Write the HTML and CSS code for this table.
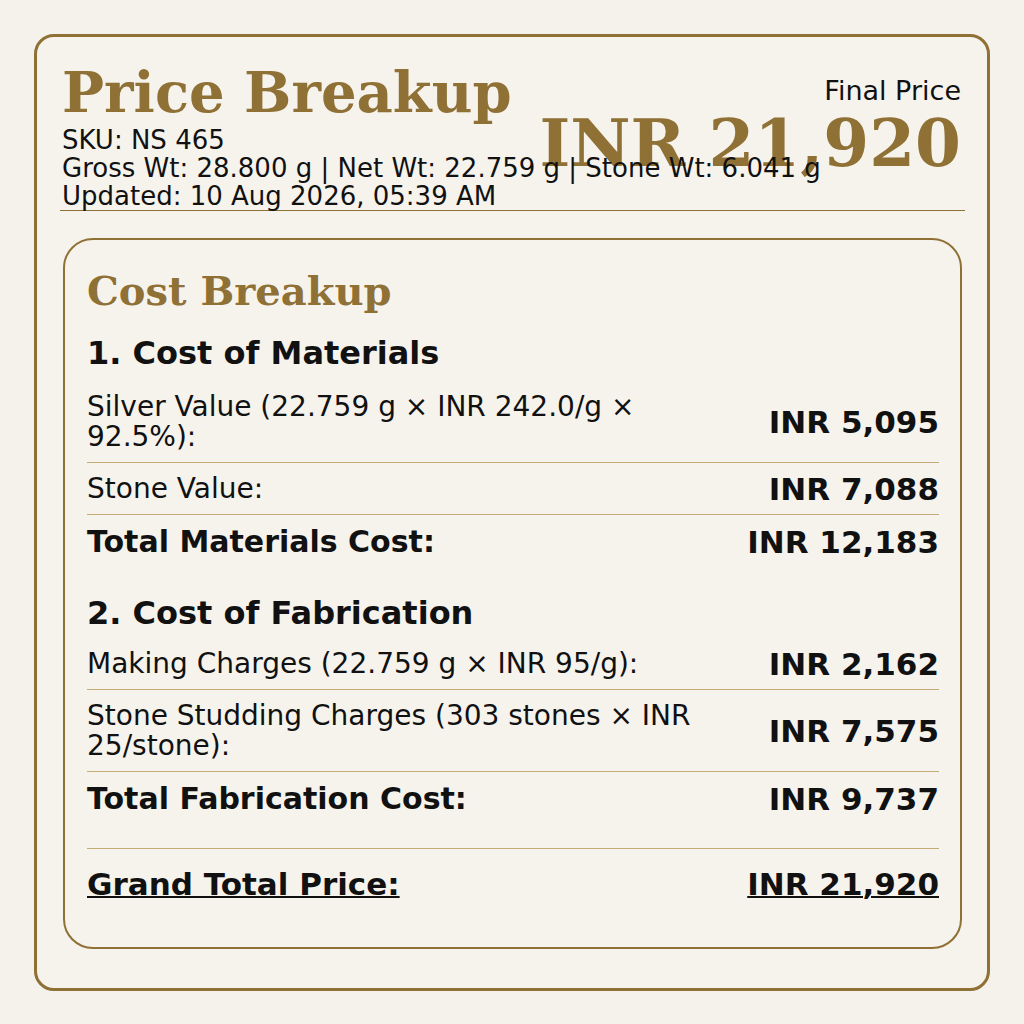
FILE: index.html
```html
<!DOCTYPE html>
<html lang="en">
<head>
<meta charset="utf-8">
<title>Price Breakup</title>
<link rel="stylesheet" href="styles.css">
</head>
<body>
<div class="card">
  <header class="header">
    <div class="header-left">
      <h1 class="title">Price Breakup</h1>
      <div class="meta">SKU: NS 465</div>
      <div class="meta">Gross Wt: 28.800 g | Net Wt: 22.759 g | Stone Wt: 6.041 g</div>
      <div class="meta">Updated: 10 Aug 2026, 05:39 AM</div>
    </div>
    <div class="header-right">
      <div class="final-label">Final Price</div>
      <div class="final-value">INR 21,920</div>
    </div>
  </header>

  <section class="cost">
    <h2 class="cost-title">Cost Breakup</h2>

    <h3 class="section-title">1. Cost of Materials</h3>
    <div class="row">
      <div class="label">Silver Value (22.759 g × INR 242.0/g × 92.5%):</div>
      <div class="value">INR 5,095</div>
    </div>
    <div class="row">
      <div class="label">Stone Value:</div>
      <div class="value">INR 7,088</div>
    </div>
    <div class="row total">
      <div class="label">Total Materials Cost:</div>
      <div class="value">INR 12,183</div>
    </div>

    <h3 class="section-title second">2. Cost of Fabrication</h3>
    <div class="row">
      <div class="label">Making Charges (22.759 g × INR 95/g):</div>
      <div class="value">INR 2,162</div>
    </div>
    <div class="row">
      <div class="label">Stone Studding Charges (303 stones × INR 25/stone):</div>
      <div class="value">INR 7,575</div>
    </div>
    <div class="row total">
      <div class="label">Total Fabrication Cost:</div>
      <div class="value">INR 9,737</div>
    </div>

    <div class="grand">
      <div class="grand-label">Grand Total Price:</div>
      <div class="grand-value">INR 21,920</div>
    </div>
  </section>
</div>
</body>
</html>
```

FILE: styles.css
```css
* { box-sizing: border-box; }

html, body {
  margin: 0;
  padding: 0;
  background: #f5f2ec;
}

body {
  padding: 34px;
  font-family: "DejaVu Sans", sans-serif;
  color: #111;
}

.card {
  border: 3px solid #8f7035;
  border-radius: 20px;
  background: #f6f3ed;
  padding: 0 22px 39px 23px;
}

.header {
  display: flex;
  justify-content: space-between;
  align-items: flex-start;
  border-bottom: 1px solid #8f7035;
  padding-top: 21px;
}

.header-left {
  position: relative;
  z-index: 2;
  white-space: nowrap;
  flex: 0 0 auto;
  width: 0;
  padding-left: 2px;
}

.title {
  margin: 0;
  font-family: "DejaVu Serif", serif;
  font-weight: bold;
  font-size: 56px;
  line-height: 68px;
  color: #8f7035;
}

.meta {
  font-size: 26px;
  line-height: 28px;
}

.header-right {
  text-align: right;
  padding-top: 19px;
  padding-right: 4px;
}

.final-label {
  font-size: 27px;
  line-height: 28px;
}

.final-value {
  font-family: "DejaVu Serif", serif;
  font-weight: bold;
  font-size: 66px;
  line-height: 76px;
  color: #8f7035;
}

.cost {
  margin: 27px 3px 0 3px;
  border: 2px solid #8f7035;
  border-radius: 30px;
  padding: 26px 21px 47px 22px;
}

.cost-title {
  margin: 0;
  font-family: "DejaVu Serif", serif;
  font-weight: bold;
  font-size: 40px;
  line-height: 49px;
  color: #8f7035;
}

.section-title {
  margin: 20px 0 9px 0;
  font-size: 32px;
  line-height: 37px;
  font-weight: bold;
}

.section-title.second {
  margin-top: 27px;
  margin-bottom: 6px;
}

.row {
  display: flex;
  justify-content: space-between;
  align-items: center;
  gap: 20px;
  padding: 11px 0 10px 0;
  border-bottom: 1px solid #c4ab76;
}

.row.total {
  border-bottom: none;
}

.label {
  font-size: 28px;
  line-height: 30px;
}

.value {
  font-size: 31px;
  line-height: 30px;
  font-weight: bold;
  white-space: nowrap;
  text-align: right;
}

.row.total .label {
  font-size: 30px;
  line-height: 32px;
  font-weight: bold;
}

.row.total .value {
  line-height: 32px;
}

.grand {
  display: flex;
  justify-content: space-between;
  align-items: center;
  margin-top: 23px;
  padding-top: 19px;
  border-top: 1px solid #c4ab76;
  font-size: 31px;
  line-height: 32px;
  font-weight: bold;
}

.grand-label,
.grand-value {
  text-decoration: underline;
  text-decoration-thickness: 2px;
  text-underline-offset: 1px;
}
```
